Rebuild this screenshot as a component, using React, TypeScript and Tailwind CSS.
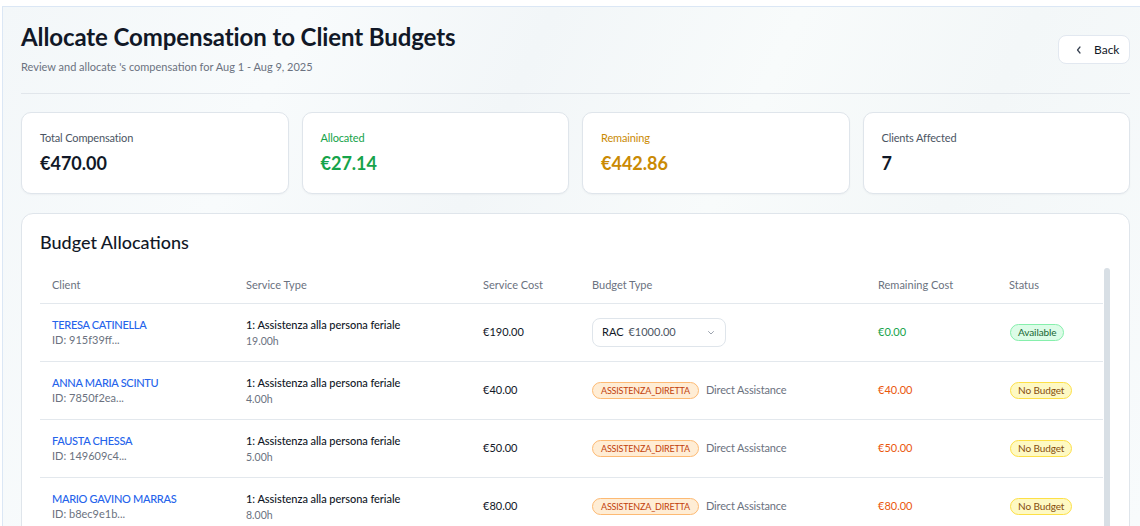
import React from "react";

type Row = {
  name: string;
  id: string;
  hours: string;
  cost: string;
  remaining: string;
  available?: boolean;
};

const rows: Row[] = [
  { name: "TERESA CATINELLA", id: "ID: 915f39ff...", hours: "19.00h", cost: "€190.00", remaining: "€0.00", available: true },
  { name: "ANNA MARIA SCINTU", id: "ID: 7850f2ea...", hours: "4.00h", cost: "€40.00", remaining: "€40.00" },
  { name: "FAUSTA CHESSA", id: "ID: 149609c4...", hours: "5.00h", cost: "€50.00", remaining: "€50.00" },
  { name: "MARIO GAVINO MARRAS", id: "ID: b8ec9e1b...", hours: "8.00h", cost: "€80.00", remaining: "€80.00" },
];

const cols = "grid grid-cols-[194px_237px_109px_286px_131px_1fr]";

function StatCard({ label, value, labelCls, valueCls }: { label: string; value: string; labelCls: string; valueCls: string }) {
  return (
    <div className="h-[82px] rounded-[10px] border border-[#dfe5eb] bg-white px-[18px] pt-[17px] shadow-[0_1px_2px_rgba(15,23,42,0.04)]">
      <div className={`text-[11px] leading-[16px] tracking-[-0.15px] ${labelCls}`}>{label}</div>
      <div className={`mt-[4px] text-[18px] font-bold leading-[26px] ${valueCls}`}>{value}</div>
    </div>
  );
}

export default function App() {
  return (
    <div className="h-[526px] overflow-hidden bg-white pl-[2px] pt-[6px] font-['Lato',sans-serif]">
      <div className="h-full border-l border-t border-[#dbe7f5] bg-[linear-gradient(115deg,#f3f7f9_0%,#f8fbfc_22%,#f2f6f8_40%,#f8fbfb_58%,#f3f7f8_75%,#f8fbfc_100%)] pl-[18px] pr-[10px] pt-[14px]">
        {/* Header */}
        <div className="flex items-center justify-between pb-[18px]">
          <div>
            <h1 className="text-[24px] font-bold leading-[32px] tracking-[-0.1px] text-[#111827]">Allocate Compensation to Client Budgets</h1>
            <p className="mt-[6px] text-[11px] leading-[16px] text-[#6b7280]">
              Review and allocate 's compensation for Aug 1 - Aug 9, 2025
            </p>
          </div>
          <button className="mt-[3px] flex h-[29px] w-[72px] items-center rounded-[8px] border border-[#e2e8f0] bg-white pl-[16px] text-[12px] text-[#111827]">
            <svg width="8" height="10" viewBox="0 0 8 10" fill="none" stroke="#374151" strokeWidth="1.2" strokeLinecap="round" strokeLinejoin="round">
              <path d="M5 2 L2.5 5 L5 8" />
            </svg>
            <span className="ml-[11px]">Back</span>
          </button>
        </div>
        <div className="h-px bg-[#e1e6eb]" />

        {/* Stats */}
        <div className="mt-[18px] grid grid-cols-4 gap-[13px]">
          <StatCard label="Total Compensation" value="€470.00" labelCls="text-[#4b5563]" valueCls="text-[#111827]" />
          <StatCard label="Allocated" value="€27.14" labelCls="text-[#16a34a]" valueCls="text-[#16a34a]" />
          <StatCard label="Remaining" value="€442.86" labelCls="text-[#ca8a04]" valueCls="text-[#ca8a04]" />
          <StatCard label="Clients Affected" value="7" labelCls="text-[#4b5563]" valueCls="text-[#111827]" />
        </div>

        {/* Budget allocations */}
        <div className="mt-[19px] h-[400px] rounded-[12px] border border-[#dfe5eb] bg-white px-[18px] pt-[18px]">
          <h2 className="text-[18px] font-medium leading-[20px] text-[#111827]">Budget Allocations</h2>
          <div className="mt-[16px] flex">
            <div className="flex-1">
              <div className={`${cols} h-[36px] items-center border-b border-[#e3e8ed] text-[11px] text-[#6b7280]`}>
                <div className="pl-[12px]">Client</div>
                <div className="pl-[12px]">Service Type</div>
                <div className="pl-[12px]">Service Cost</div>
                <div className="pl-[12px]">Budget Type</div>
                <div className="pl-[12px]">Remaining Cost</div>
                <div className="pl-[12px]">Status</div>
              </div>
              {rows.map((r) => (
                <div key={r.name} className={`${cols} h-[58px] items-center border-b border-[#e3e8ed]`}>
                  <div className="pl-[12px]">
                    <div className="text-[11px] font-medium leading-[14px] tracking-[-0.3px] text-[#2563eb]">{r.name}</div>
                    <div className="mt-[1px] text-[11px] leading-[14px] text-[#6b7280]">{r.id}</div>
                  </div>
                  <div className="pl-[12px]">
                    <div className="text-[11px] font-medium leading-[16px] tracking-[-0.05px] text-[#111827]">1: Assistenza alla persona feriale</div>
                    <div className="mt-[1px] text-[10.5px] leading-[14px] text-[#6b7280]">{r.hours}</div>
                  </div>
                  <div className="pl-[12px] text-[11px] text-[#111827]">{r.cost}</div>
                  <div className="pl-[12px]">
                    {r.available ? (
                      <div className="flex h-[29px] w-[134px] items-center rounded-[8px] border border-[#dfe5eb] bg-white pl-[9px] pr-[10px] text-[11px]">
                        <span className="text-[#111827]">RAC</span>
                        <span className="ml-[5px] text-[#4b5563]">€1000.00</span>
                        <svg className="ml-auto" width="8" height="6" viewBox="0 0 8 6" fill="none" stroke="#9ca3af" strokeWidth="1" strokeLinecap="round" strokeLinejoin="round">
                          <path d="M1.5 1.5 L4 4 L6.5 1.5" />
                        </svg>
                      </div>
                    ) : (
                      <div className="flex items-center">
                        <span className="flex h-[17px] items-center rounded-full border border-[#fdba74] bg-[#ffedd5] px-[8px] text-[9px] tracking-[-0.2px] text-[#c2410c]">
                          ASSISTENZA_DIRETTA
                        </span>
                        <span className="ml-[7px] text-[11px] tracking-[-0.15px] text-[#6b7280]">Direct Assistance</span>
                      </div>
                    )}
                  </div>
                  <div className={`pl-[12px] text-[11px] ${r.available ? "text-[#16a34a]" : "text-[#ea580c]"}`}>{r.remaining}</div>
                  <div className="flex items-center pl-[13px]">
                    {r.available ? (
                      <span className="flex h-[17px] items-center rounded-full border border-[#86efac] bg-[#dcfce7] px-[7px] text-[10px] tracking-[-0.1px] text-[#166534]">
                        Available
                      </span>
                    ) : (
                      <span className="flex h-[17px] items-center rounded-full border border-[#fde047] bg-[#fef9c3] px-[7px] text-[10px] tracking-[-0.1px] text-[#854d0e]">
                        No Budget
                      </span>
                    )}
                  </div>
                </div>
              ))}
            </div>
            <div className="ml-[1px] h-[300px] w-[6px] rounded-t-[3px] bg-[#d8dfe5]" />
            <div className="w-[1px]" />
          </div>
        </div>
      </div>
    </div>
  );
}
